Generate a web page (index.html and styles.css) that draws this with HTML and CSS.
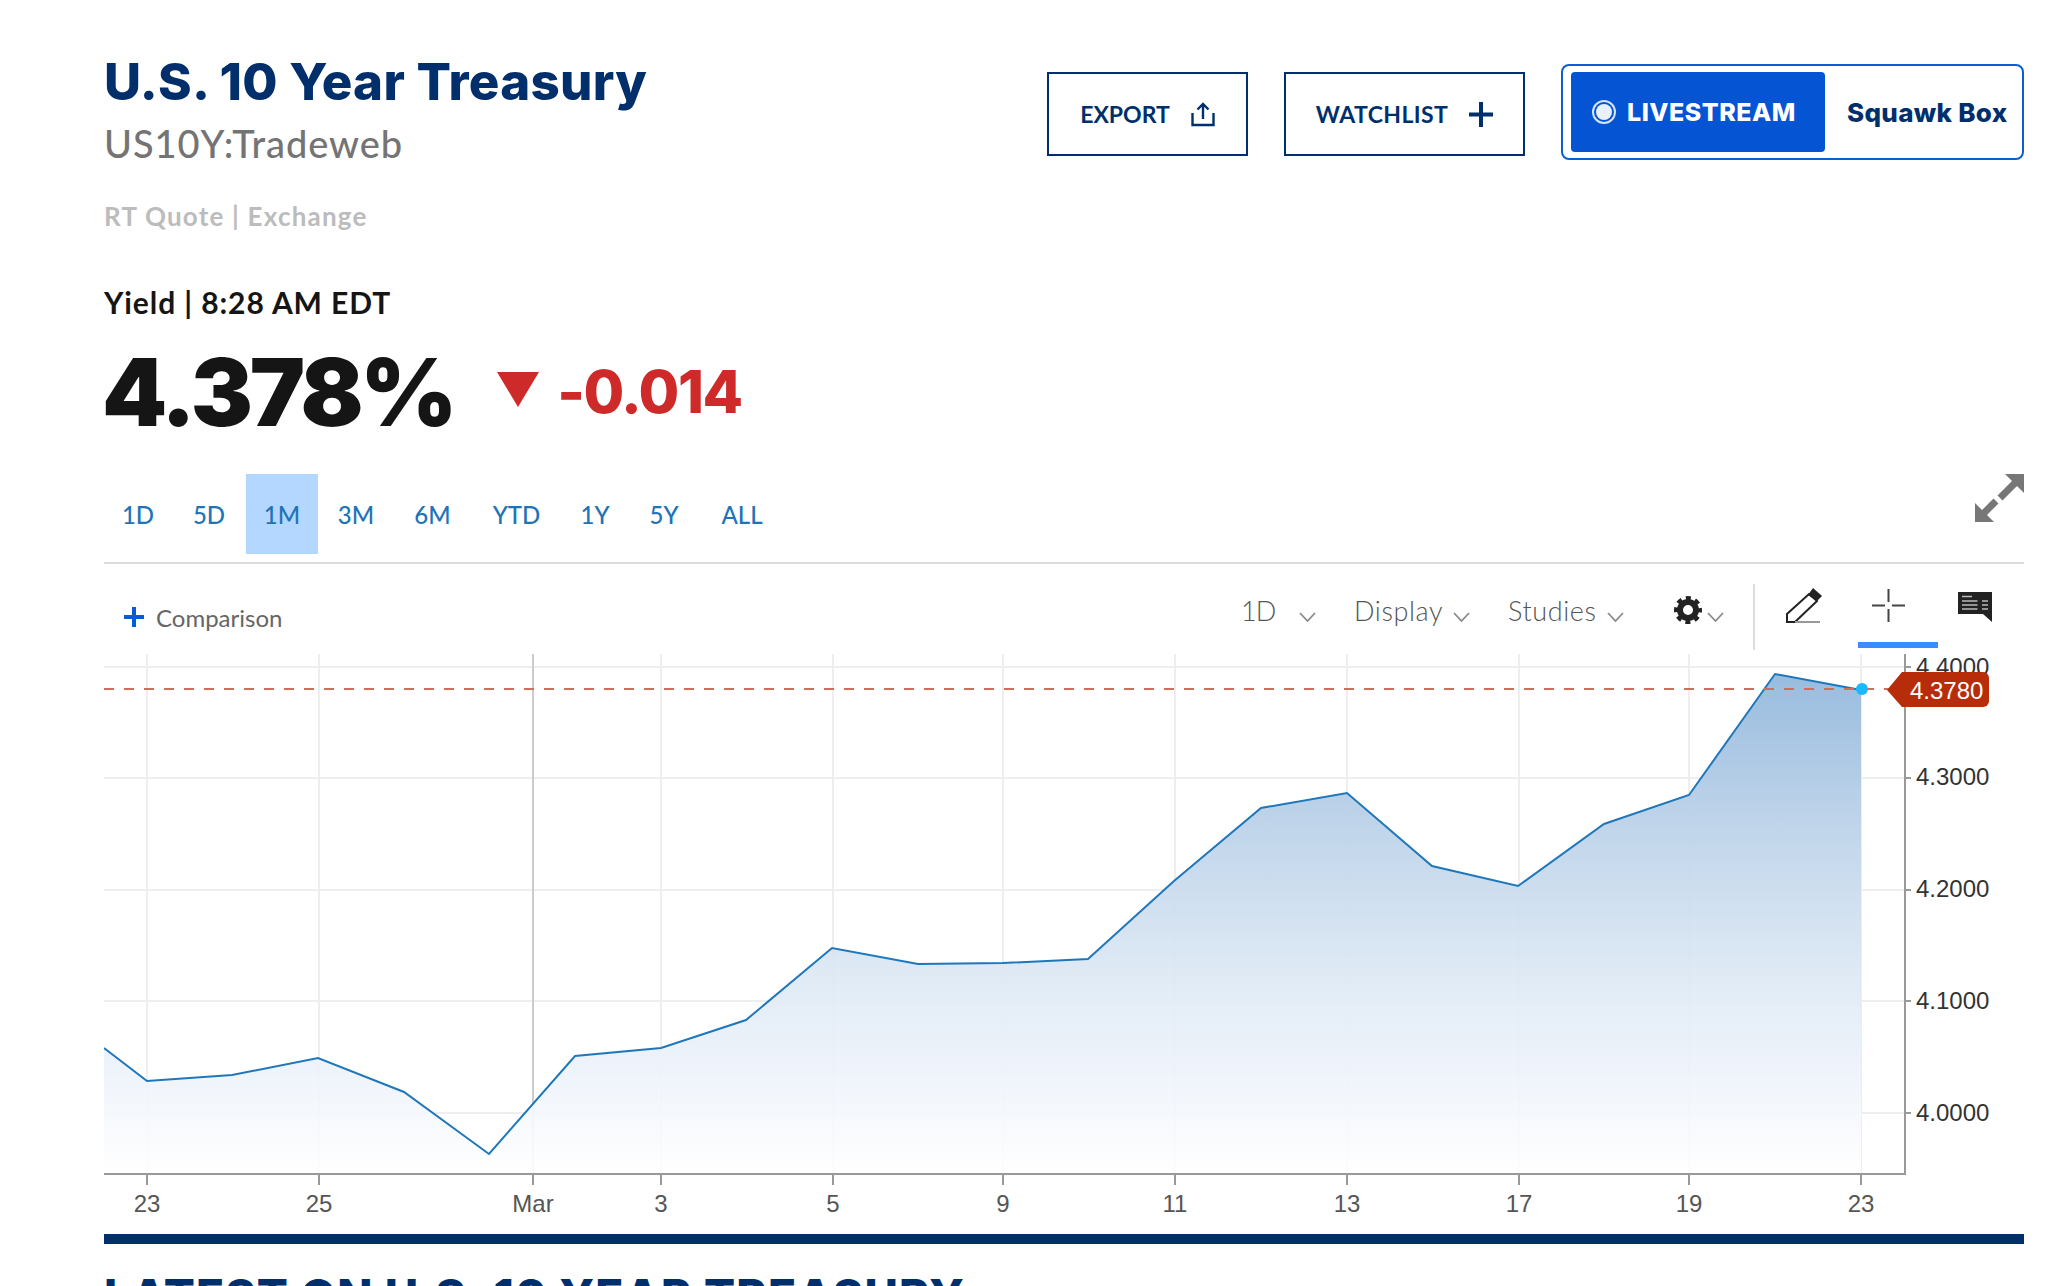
FILE: index.html
```html
<!DOCTYPE html>
<html lang="en">
<head>
<meta charset="utf-8">
<title>U.S. 10 Year Treasury</title>
<link rel="stylesheet" href="styles.css">
</head>
<body>
<main class="page">
  <header class="quote-head">
    <div class="quote-title">
      <h1 class="title">U.S. 10 Year Treasury</h1>
      <div class="symbol">US10Y:Tradeweb</div>
      <div class="rt">RT Quote | Exchange</div>
    </div>
    <div class="actions">
      <button class="btn btn-export">EXPORT
        <svg class="ico-upload" viewBox="0 0 24 25"><path d="M12 2v15M6.500 7.500 12 2l5.500 5.500" fill="none" stroke="#002f6c" stroke-width="2.400"/><path d="M1.500 11v12h21V11" fill="none" stroke="#002f6c" stroke-width="2.400"/></svg>
      </button>
      <button class="btn btn-watch">WATCHLIST
        <svg class="ico-plus" viewBox="0 0 24 25"><path d="M12 0v25M0 12.500h24" stroke="#002f6c" stroke-width="4"/></svg>
      </button>
      <div class="live">
        <div class="live-on">
          <svg class="ico-live" viewBox="0 0 24 24"><circle cx="12" cy="12" r="11" fill="none" stroke="#d7e5fa" stroke-width="2"/><circle cx="12" cy="12" r="8" fill="#e9f1fc"/></svg>
          LIVESTREAM
        </div>
        <div class="live-name">Squawk Box</div>
      </div>
    </div>
  </header>

  <div class="yield-label">Yield | 8:28 AM EDT</div>
  <div class="price-row">
    <span class="price">4.378%</span>
    <svg class="ico-down" viewBox="0 0 42 35"><polygon points="0,0 42,0 21,35" fill="#cf2a2a"/></svg>
    <span class="change">-0.014</span>
  </div>

  <div class="range-row">
    <nav class="ranges">
      <a class="range">1D</a><a class="range">5D</a><a class="range range-on">1M</a><a class="range">3M</a><a class="range">6M</a><a class="range">YTD</a><a class="range">1Y</a><a class="range">5Y</a><a class="range">ALL</a>
    </nav>
    <svg class="ico-expand" viewBox="0 0 49 48">
      <path d="M30 0h19v19z" fill="#777"/><path d="M42 7 25 24" stroke="#777" stroke-width="7"/>
      <path d="M0 29v19h19z" fill="#777"/><path d="M7 41 21 27" stroke="#777" stroke-width="7"/>
    </svg>
  </div>

  <div class="toolbar">
    <div class="comparison">
      <svg class="ico-cplus" viewBox="0 0 20 20"><path d="M10 0v20M0 10h20" stroke="#0a5bd3" stroke-width="4"/></svg>
      <span>Comparison</span>
    </div>
    <div class="tools">
      <div class="tool t-1d"><span>1D</span><svg class="chev" viewBox="0 0 17 10"><path d="M1 1l7.500 8L16 1" fill="none" stroke="#8a8a8a" stroke-width="1.800"/></svg></div>
      <div class="tool t-display"><span>Display</span><svg class="chev" viewBox="0 0 17 10"><path d="M1 1l7.500 8L16 1" fill="none" stroke="#8a8a8a" stroke-width="1.800"/></svg></div>
      <div class="tool t-studies"><span>Studies</span><svg class="chev" viewBox="0 0 17 10"><path d="M1 1l7.500 8L16 1" fill="none" stroke="#8a8a8a" stroke-width="1.800"/></svg></div>
      <div class="tool t-gear">
        <svg class="ico-gear" viewBox="0 0 28 28"><circle cx="14" cy="14" r="8" fill="none" stroke="#222" stroke-width="6"/><circle cx="14" cy="14" r="12" fill="none" stroke="#222" stroke-width="4" stroke-dasharray="5 4.425" stroke-dashoffset="2.500"/></svg>
        <svg class="chev" viewBox="0 0 17 10"><path d="M1 1l7.500 8L16 1" fill="none" stroke="#8a8a8a" stroke-width="1.800"/></svg>
      </div>
      <div class="tool-icons">
        <svg class="ico-pencil" viewBox="0 0 36 35"><path d="M1 34v-8L23 6l8 7L9 34z" fill="none" stroke="#222" stroke-width="2"/><path d="M22 7l5-7 9 8-5 5z" fill="#222"/><path d="M9 34h25" stroke="#999" stroke-width="2"/></svg>
        <div class="tool-cross"><svg class="ico-cross" viewBox="0 0 33 33"><path d="M0 16.500h13M20 16.500h13M16.500 0v13M16.500 20v13" stroke="#444" stroke-width="2"/></svg></div>
        <svg class="ico-note" viewBox="0 0 34 30"><path d="M0 0h34v30l-9-8H0z" fill="#222"/><path d="M4 4.500h10M4 9h15.500M4 13h15.500M4 17h15.500M24 9h6M24 13h6M24 17h6" stroke="#bbb" stroke-width="1.500"/></svg>
      </div>
    </div>
  </div>

  <svg class="chart" viewBox="104 650 1920 584">
    <defs>
      <linearGradient id="area" gradientUnits="userSpaceOnUse" x1="0" y1="674" x2="0" y2="1174">
        <stop offset="0" stop-color="#94b9dd" stop-opacity="0.96"/>
        <stop offset="0.3" stop-color="#bcd2e9" stop-opacity="0.95"/>
        <stop offset="0.65" stop-color="#e2ecf6" stop-opacity="0.93"/>
        <stop offset="0.8" stop-color="#eef3fb" stop-opacity="0.93"/>
        <stop offset="1" stop-color="#ffffff" stop-opacity="0.9"/>
      </linearGradient>
    </defs>
    <g class="grid-h">
      <path d="M104 667H1905M104 778H1905M104 890H1905M104 1001H1905M104 1113H1905"/>
    </g>
    <g class="grid-v">
      <path d="M147 654V1174M319 654V1174M661 654V1174M833 654V1174M1003 654V1174M1175 654V1174M1347 654V1174M1519 654V1174M1689 654V1174M1861 654V1174"/>
    </g>
    <path class="grid-mar" d="M533 654V1174"/>
    <polygon fill="url(#area)" points="104,1048 147,1081 232,1075 318,1058 404,1092 489,1154 575,1056 661,1048 746,1020 832,948 918,964 1003,963 1088,959 1174,881 1261,808 1347,793 1432,866 1518,886 1604,824 1689,795 1775,674 1861,690 1861,1174 104,1174"/>
    <polyline class="line" points="104,1048 147,1081 232,1075 318,1058 404,1092 489,1154 575,1056 661,1048 746,1020 832,948 918,964 1003,963 1088,959 1174,881 1261,808 1347,793 1432,866 1518,886 1604,824 1689,795 1775,674 1861,690"/>
    <path class="last-line" d="M104 689H1890"/>
    <path class="axis" d="M104 1174H1905V654"/>
    <path class="ticks" d="M147 1174v11M319 1174v11M533 1174v11M661 1174v11M833 1174v11M1003 1174v11M1175 1174v11M1347 1174v11M1519 1174v11M1689 1174v11M1861 1174v11M1905 667h6M1905 778h6M1905 890h6M1905 1001h6M1905 1113h6"/>
    <g class="y-labels">
      <text x="1916" y="675">4.4000</text>
      <text x="1916" y="785">4.3000</text>
      <text x="1916" y="897">4.2000</text>
      <text x="1916" y="1009">4.1000</text>
      <text x="1916" y="1121">4.0000</text>
    </g>
    <g class="x-labels">
      <text x="147" y="1212">23</text><text x="319" y="1212">25</text><text x="533" y="1212">Mar</text><text x="661" y="1212">3</text><text x="833" y="1212">5</text><text x="1003" y="1212">9</text><text x="1175" y="1212">11</text><text x="1347" y="1212">13</text><text x="1519" y="1212">17</text><text x="1689" y="1212">19</text><text x="1861" y="1212">23</text>
    </g>
    <path class="tag" d="M1887 690l15-18h81a6 6 0 0 1 6 6v23a6 6 0 0 1-6 6h-81z"/>
    <text class="tag-text" x="1910" y="699">4.3780</text>
    <circle class="dot" cx="1862" cy="689" r="6"/>
  </svg>

  <div class="bar"></div>
  <h2 class="latest">LATEST ON U.S. 10 YEAR TREASURY</h2>
</main>
</body>
</html>
```

FILE: styles.css
```css
* { box-sizing: border-box; }
html, body { margin: 0; padding: 0; background: #fff; }
body { height: 1286px; overflow: hidden; font-family: Lato, "Open Sans", sans-serif; }
.page { padding: 0 44px 0 104px; }
svg { display: block; flex: none; }

.quote-head { display: flex; justify-content: space-between; align-items: flex-start; padding-top: 50px; height: 232px; }
.title { margin: 0; font-family: Inter, sans-serif; font-size: 51px; line-height: 64px; font-weight: 800; letter-spacing: 0.3px; color: #002f6c; }
.symbol { margin-top: 7px; font-size: 38px; line-height: 44px; font-weight: 500; letter-spacing: 0.9px; color: #747474; }
.rt { margin-top: 35px; font-size: 26px; line-height: 32px; font-weight: 700; letter-spacing: 1.2px; color: #bcbcbc; }

.actions { display: flex; align-items: flex-start; margin-top: 14px; }
.btn { display: flex; align-items: center; justify-content: center; height: 84px; margin-top: 8px; background: #fff; border: 2px solid #002f6c; border-radius: 0; color: #002f6c; font: 700 23px/1 Lato, sans-serif; padding: 0; }
.btn-export { width: 201px; gap: 21px; margin-right: 36px; }
.btn-watch { width: 241px; gap: 21px; margin-right: 36px; letter-spacing: 0.4px; }
.ico-upload, .ico-plus { width: 24px; height: 25px; }
.live { display: flex; align-items: center; width: 463px; height: 96px; border: 2px solid #0b5fd0; border-radius: 8px; padding: 6px 8px; }
.live-on { display: flex; align-items: center; gap: 11px; width: 254px; height: 80px; padding-left: 21px; background: #0454d4; border-radius: 4px; color: #fff; font-family: Inter, sans-serif; font-size: 25px; font-weight: 800; letter-spacing: 0.5px; }
.ico-live { width: 24px; height: 24px; }
.live-name { margin-left: 22px; font-family: Inter, sans-serif; font-size: 26px; font-weight: 800; letter-spacing: 0.3px; color: #002f6c; white-space: nowrap; }

.yield-label { margin-top: 52px; font-size: 30px; line-height: 36px; font-weight: 700; letter-spacing: 0.9px; color: #151515; }
.price-row { display: flex; align-items: center; height: 100px; margin-top: 22px; }
.price { margin-left: -2px; font-family: Inter, sans-serif; font-size: 93px; line-height: 100px; font-weight: 900; letter-spacing: -3.2px; color: #151515; }
.ico-down { width: 42px; height: 35px; margin: -6px 18px 0 43px; }
.change { font-family: Inter, sans-serif; font-size: 59px; line-height: 100px; font-weight: 800; letter-spacing: -1.5px; color: #cf2a2a; }

.range-row { display: flex; justify-content: space-between; align-items: flex-start; height: 80px; margin-top: 32px; }
.ranges { display: grid; grid-template-columns: 68px 74px 72px 76px 77px 91px 66px 72px 84px; }
.range { display: flex; align-items: center; justify-content: center; height: 80px; font-size: 24px; font-weight: 500; color: #1f74b6; }
.range-on { background: #b3d7ff; }
.ico-expand { width: 49px; height: 48px; }

.toolbar { display: flex; justify-content: space-between; align-items: flex-start; height: 88px; margin-top: 8px; border-top: 2px solid #dcdcdc; }
.comparison { display: flex; align-items: center; gap: 12px; margin: 39px 0 0 20px; font-size: 24px; color: #666; }
.ico-cplus { width: 20px; height: 20px; margin-top: -2px; }
.tools { display: flex; align-items: flex-start; padding: 20px 32px 0 0; }
.tool { display: flex; align-items: center; height: 44px; margin-top: 4px; font-size: 27px; font-weight: 300; letter-spacing: 0.6px; color: #555; }
.tool .chev { width: 17px; height: 10px; margin-top: 14px; }
.t-1d { width: 113px; gap: 29px; }
.t-1d span { width: 29px; letter-spacing: -1px; white-space: nowrap; }
.t-display { width: 154px; gap: 10px; }
.t-studies { width: 166px; gap: 10px; }
.t-gear { width: 79px; gap: 5px; }
.ico-gear { width: 28px; height: 28px; }
.tool-icons { display: flex; align-items: flex-start; height: 66px; padding-left: 31px; border-left: 2px solid #dcdcdc; }
.ico-pencil { width: 36px; height: 35px; margin-top: 4px; }
.tool-cross { width: 80px; height: 64px; margin-left: 36px; padding: 5px 0 0 14px; border-bottom: 6px solid #3a8dff; }
.ico-cross { width: 33px; height: 33px; }
.ico-note { width: 34px; height: 30px; margin: 8px 0 0 20px; }

.chart { width: 1920px; height: 584px; }
.grid-h path { stroke: #eeeeee; stroke-width: 2; fill: none; }
.grid-v path { stroke: #eeeeee; stroke-width: 2; fill: none; }
.grid-mar { stroke: #cccccc; stroke-width: 2; fill: none; }
.line { fill: none; stroke: #1f77bb; stroke-width: 2; }
.last-line { stroke: #cf6d5e; stroke-width: 2; stroke-dasharray: 10 10; fill: none; }
.axis { fill: none; stroke: #999; stroke-width: 2; }
.ticks { fill: none; stroke: #999; stroke-width: 2; }
.y-labels text { font: 24px "Liberation Sans", sans-serif; fill: #333; }
.x-labels text { font: 24px "Liberation Sans", sans-serif; fill: #555; text-anchor: middle; }
.tag { fill: #b72d0a; }
.tag-text { font: 24px "Liberation Sans", sans-serif; fill: #fff; }
.dot { fill: #1ab8ff; }

.bar { height: 10px; background: #002f6c; }
.latest { margin: 27px 0 0; font-family: Inter, sans-serif; font-size: 46px; line-height: 50px; font-weight: 800; letter-spacing: 1.2px; color: #002f6c; white-space: nowrap; }
```
